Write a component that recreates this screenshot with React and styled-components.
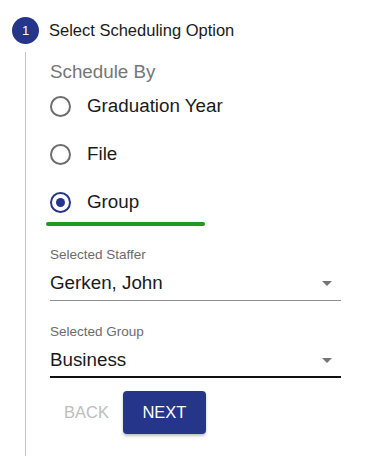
import React, { useState } from 'react'
import styled, { createGlobalStyle } from 'styled-components'

const GlobalStyle = createGlobalStyle`
  html, body {
    margin: 0;
    padding: 0;
    background: #ffffff;
    overflow: hidden;
  }
  body {
    font-family: "Liberation Sans", Arial, sans-serif;
    color: #1a1a1a;
  }
`

const navy = '#25358a'

const Page = styled.div`
  padding-top: 17px;
  height: 456px;
  display: flex;
  flex-direction: column;
`

const StepHeader = styled.div`
  display: flex;
  align-items: center;
  padding-left: 12px;
`

const StepIcon = styled.div`
  width: 27px;
  height: 27px;
  border-radius: 50%;
  background: ${navy};
  color: #fff;
  font-size: 13px;
  display: flex;
  align-items: center;
  justify-content: center;
  margin-right: 10px;
`

const StepTitle = styled.span`
  font-size: 16.5px;
  color: #1a1a1a;
  margin-top: -1px;
`

const StepBody = styled.div`
  flex: 1;
  margin-top: 8px;
  margin-left: 25px;
  border-left: 1.5px solid #c4c4c4;
  padding: 9px 0 0 24px;
  width: 291px;
`

const Legend = styled.div`
  font-size: 18.8px;
  line-height: 22px;
  color: #767676;
  margin-bottom: 3px;
`

const RadioList = styled.div`
  display: flex;
  flex-direction: column;
  gap: 8px;
`

const RadioRow = styled.label`
  display: flex;
  align-items: center;
  height: 40px;
  font-size: 18.8px;
  cursor: pointer;
`

const RadioCircle = styled.span`
  box-sizing: border-box;
  width: 21px;
  height: 21px;
  border-radius: 50%;
  border: 2px solid ${(p) => (p.$checked ? navy : '#6d6d6d')};
  display: flex;
  align-items: center;
  justify-content: center;
  margin-right: 16px;

  &::after {
    content: '';
    width: 9px;
    height: 9px;
    border-radius: 50%;
    background: ${navy};
    display: ${(p) => (p.$checked ? 'block' : 'none')};
  }
`

const Highlight = styled.div`
  width: 159px;
  height: 4px;
  margin-left: -4px;
  border-radius: 2px;
  background: #1d9a1d;
`

const Field = styled.div`
  margin-top: ${(p) => p.$gap}px;
  width: 291px;
`

const FieldLabel = styled.div`
  font-size: 13.5px;
  line-height: 16px;
  color: #6b6b6b;
`

const SelectBox = styled.div`
  display: flex;
  align-items: flex-start;
  justify-content: space-between;
  padding: 9px 9px 0 0;
  height: ${(p) => (p.$focused ? 27 : 28)}px;
  font-size: 18.8px;
  line-height: 22px;
  border-bottom: ${(p) => (p.$focused ? '2px solid #111' : '1px solid #8e8e8e')};
`

const Caret = styled.span`
  width: 0;
  height: 0;
  margin-top: 9px;
  border-left: 5px solid transparent;
  border-right: 5px solid transparent;
  border-top: 5px solid #757575;
`

const Actions = styled.div`
  display: flex;
  align-items: center;
  margin-top: 13px;
`

const TextButton = styled.button`
  font-family: inherit;
  font-size: 16.5px;
  background: none;
  border: none;
  color: #bdbdbd;
  padding: 0 13px 0 14px;
  height: 43px;
  margin-right: 1px;
`

const PrimaryButton = styled.button`
  font-family: inherit;
  font-size: 16.5px;
  background: ${navy};
  color: #fff;
  border: none;
  border-radius: 4px;
  width: 83px;
  height: 43px;
  box-shadow: 0 2px 3px rgba(0, 0, 0, 0.25);
`

const options = ['Graduation Year', 'File', 'Group']

export default function App() {
  const [choice, setChoice] = useState('Group')

  return (
    <Page>
      <GlobalStyle />
      <StepHeader>
        <StepIcon>1</StepIcon>
        <StepTitle>Select Scheduling Option</StepTitle>
      </StepHeader>
      <StepBody>
        <Legend>Schedule By</Legend>
        <RadioList>
          {options.map((o) => (
            <RadioRow key={o} onClick={() => setChoice(o)}>
              <RadioCircle $checked={choice === o} />
              {o}
            </RadioRow>
          ))}
        </RadioList>
        <Highlight />
        <Field $gap={21}>
          <FieldLabel>Selected Staffer</FieldLabel>
          <SelectBox>
            Gerken, John
            <Caret />
          </SelectBox>
        </Field>
        <Field $gap={23}>
          <FieldLabel>Selected Group</FieldLabel>
          <SelectBox $focused>
            Business
            <Caret />
          </SelectBox>
        </Field>
        <Actions>
          <TextButton>BACK</TextButton>
          <PrimaryButton>NEXT</PrimaryButton>
        </Actions>
      </StepBody>
    </Page>
  )
}
